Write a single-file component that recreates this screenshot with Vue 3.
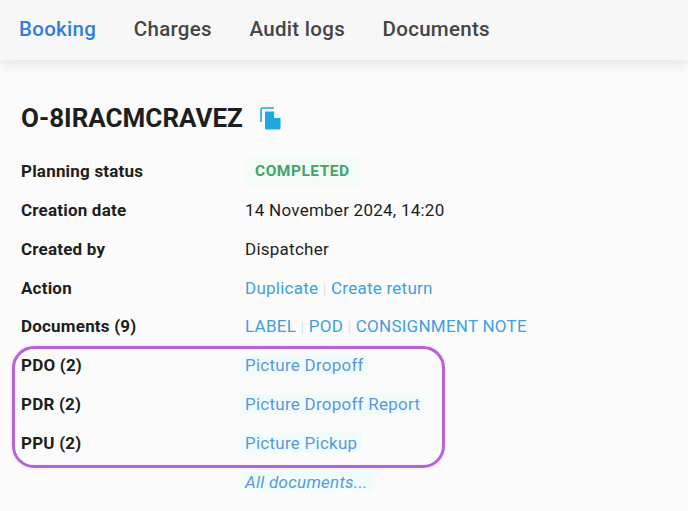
<script setup>
const tabs = ['Booking', 'Charges', 'Audit logs', 'Documents']

const rows = [
  { label: 'Planning status', badge: 'COMPLETED' },
  { label: 'Creation date', text: '14 November 2024, 14:20' },
  { label: 'Created by', text: 'Dispatcher' },
  { label: 'Action', links: ['Duplicate', 'Create return'] },
  { label: 'Documents (9)', links: ['LABEL', 'POD', 'CONSIGNMENT NOTE'] }
]

const pictures = [
  { label: 'PDO (2)', link: 'Picture Dropoff' },
  { label: 'PDR (2)', link: 'Picture Dropoff Report' },
  { label: 'PPU (2)', link: 'Picture Pickup' }
]
</script>

<template>
  <div class="page">
    <nav class="tabs">
      <a v-for="(tab, i) in tabs" :key="tab" class="tab" :class="{ active: i === 0 }">{{ tab }}</a>
    </nav>

    <main class="content">
      <div class="title-row">
        <h1>O-8IRACMCRAVEZ</h1>
        <svg class="copy" width="21" height="23" viewBox="0 0 21 23">
          <path d="M1 15V3a2 2 0 0 1 2-2h11" fill="none" stroke="#1fa7e0" stroke-width="1.6" />
          <path d="M5.500 4.500h8.500l6.500 6.500v10a1.500 1.500 0 0 1-1.500 1.500h-12A1.500 1.500 0 0 1 5 21V5a.5.5 0 0 1 .5-.5z" fill="#1fa7e0" />
          <path d="M14 4.500l6.500 6.500H14z" fill="#e9f6fc" />
        </svg>
      </div>

      <div v-for="row in rows" :key="row.label" class="row">
        <span class="label">{{ row.label }}</span>
        <span v-if="row.badge" class="badge">{{ row.badge }}</span>
        <span v-else-if="row.text" class="value">{{ row.text }}</span>
        <span v-else class="value">
          <template v-for="(link, i) in row.links" :key="link">
            <span v-if="i > 0" class="sep">|</span>
            <a class="link">{{ link }}</a>
          </template>
        </span>
      </div>

      <div class="highlighted">
        <div v-for="row in pictures" :key="row.label" class="row">
          <span class="label">{{ row.label }}</span>
          <a class="link tinted">{{ row.link }}</a>
        </div>
        <div class="marker"></div>
      </div>

      <div class="row">
        <span class="label"></span>
        <a class="link all tinted">All documents...</a>
      </div>
    </main>
  </div>
</template>

<style scoped>
.page {
  width: 688px;
  height: 511px;
  overflow: hidden;
  background: #fbfbfb;
  font-family: Roboto, "Liberation Sans", sans-serif;
  color: #1e1e1e;
}

.tabs {
  display: flex;
  gap: 37.500px;
  height: 60px;
  padding: 0 0 3px 19px;
  align-items: center;
  box-sizing: border-box;
  background: #f7f7f7;
  box-shadow: 0 3px 14px rgba(0, 0, 0, 0.1);
}

.tab {
  font-size: 20.500px;
  font-weight: 500;
  letter-spacing: 0.3px;
  color: #454545;
}

.tab.active {
  color: #2f7fd8;
}

.content {
  padding: 41px 0 0 21px;
}

.title-row {
  display: flex;
  align-items: center;
  gap: 17px;
  height: 34px;
  margin-bottom: 16.800px;
}

h1 {
  margin: 0;
  font-size: 26px;
  font-weight: 700;
  line-height: 34px;
  color: #1e1e1e;
}

.row {
  display: flex;
  align-items: center;
  height: 38.800px;
}

.label {
  width: 224px;
  flex: none;
  font-size: 17px;
  font-weight: 700;
  letter-spacing: 0.2px;
}

.value {
  font-size: 17px;
  letter-spacing: 0.25px;
}

.badge {
  padding: 6px 11px 6px 10px;
  font-size: 15.500px;
  font-weight: 700;
  letter-spacing: 0.5px;
  color: #44a36a;
  background: #f3fbf5;
  border-radius: 6px;
}

.link {
  font-size: 17px;
  letter-spacing: 0.25px;
  color: #3f9fe0;
}

.sep {
  margin: 0 4.500px;
  font-size: 14px;
  color: #cfe3ef;
}

.tinted {
  margin-left: -5px;
  padding: 0 5px;
  color: #5c97dc;
  background: #f0fcfc;
}

.all {
  font-style: italic;
}

.highlighted {
  position: relative;
}

.marker {
  position: absolute;
  top: 0;
  left: -9px;
  width: 433px;
  height: 122px;
  box-sizing: border-box;
  border: 3px solid #b565d0;
  border-radius: 22px;
  box-shadow: 0 0 0 2px #feeefb;
  pointer-events: none;
}
</style>

<style>
html,
body {
  margin: 0;
}
</style>
